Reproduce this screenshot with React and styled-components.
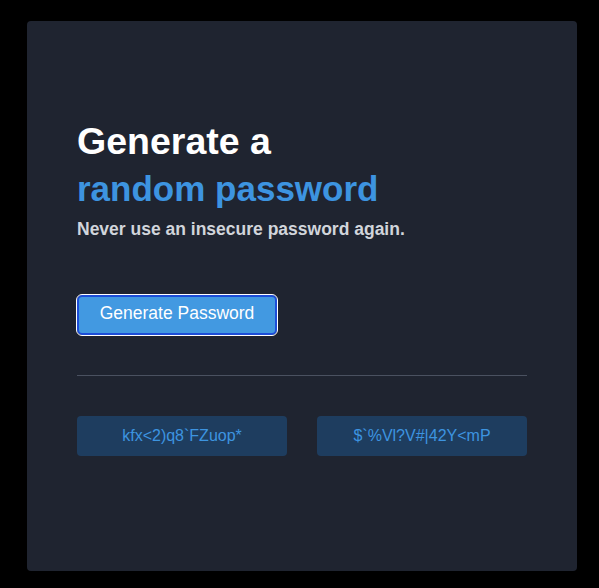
import React from "react";
import styled, { createGlobalStyle } from "styled-components";

const GlobalStyle = createGlobalStyle`
  html, body {
    margin: 0;
    padding: 0;
    background: #000;
  }
  body {
    font-family: "Liberation Sans", Arial, sans-serif;
  }
`;

const Page = styled.div`
  width: 599px;
  height: 588px;
  padding: 21px 0 0 27px;
  box-sizing: border-box;
`;

const Card = styled.div`
  width: 550px;
  height: 550px;
  box-sizing: border-box;
  padding: 97px 50px 0;
  background: #1f2430;
  border-radius: 4px;
`;

const Title = styled.h1`
  margin: 0;
  font-size: 37.5px;
  line-height: 47px;
  font-weight: 700;
  color: #fff;
`;

const Accent = styled.span`
  display: block;
  font-size: 35px;
  color: #3d94e0;
`;

const Subtitle = styled.p`
  margin: 6px 0 0;
  font-size: 17.5px;
  line-height: 22px;
  font-weight: 700;
  color: #d1d5db;
`;

const GenerateButton = styled.button`
  display: block;
  margin-top: 55px;
  width: 200px;
  height: 40px;
  padding: 0 0 3px;
  box-sizing: border-box;
  background: #4299e1;
  border: 2px solid #1d4ed8;
  border-radius: 5px;
  outline: 1px solid #fff;
  outline-offset: 0;
  color: #fff;
  font-family: inherit;
  font-size: 17.5px;
  cursor: pointer;
`;

const Divider = styled.hr`
  margin: 40px 0 0;
  border: none;
  border-top: 1px solid #4a5160;
`;

const Results = styled.div`
  margin-top: 40px;
  display: grid;
  grid-template-columns: 1fr 1fr;
  gap: 30px;
`;

const PasswordBox = styled.div`
  height: 40px;
  border-radius: 4px;
  background: #1e3d5f;
  color: #3d94e0;
  font-size: 16px;
  display: flex;
  align-items: center;
  justify-content: center;
`;

const passwords = ["kfx<2)q8`FZuop*", "$`%Vl?V#|42Y<mP"];

export default function App() {
  return (
    <>
      <GlobalStyle />
      <Page>
        <Card>
          <Title>
            Generate a
            <Accent>random password</Accent>
          </Title>
          <Subtitle>Never use an insecure password again.</Subtitle>
          <GenerateButton>Generate Password</GenerateButton>
          <Divider />
          <Results>
            {passwords.map(p => (
              <PasswordBox key={p}>{p}</PasswordBox>
            ))}
          </Results>
        </Card>
      </Page>
    </>
  );
}
